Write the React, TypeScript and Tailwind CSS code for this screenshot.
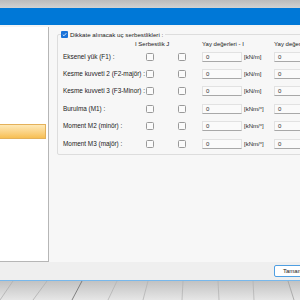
import React from "react";

const rows = [
  { label: "Eksenel yük (F1) :", unit: "[kN/m]" },
  { label: "Kesme kuvveti 2 (F2-majör) :", unit: "[kN/m]" },
  { label: "Kesme kuvveti 3 (F3-Minor) :", unit: "[kN/m]" },
  { label: "Burulma (M1) :", unit: "[kNm/°]" },
  { label: "Moment M2 (minör) :", unit: "[kNm/°]" },
  { label: "Moment M3 (majör) :", unit: "[kNm/°]" },
];

// floor lines of the desktop wallpaper: [x at top, x at bottom, colour]
const floorLines: [number, number, string][] = [
  [13, 0, "#b0b0b0"],
  [47, 33, "#b0b0b0"],
  [82, 72, "#6a6a6a"],
  [117, 108, "#b4b4b4"],
  [148, 143, "#b4b4b4"],
  [183, 182, "#b4b4b4"],
  [218, 219, "#b4b4b4"],
  [253, 254, "#b4b4b4"],
  [288, 294, "#a0a0a0"],
];

function Box() {
  return <div className="w-[8px] h-[8px] rounded-[1.5px] border border-[#9a9a9a] bg-[#fbfbfb]" />;
}

function Field() {
  return (
    <div className="w-[40px] h-[10px] shrink-0 flex items-center pl-[3px] bg-[#fafafa] border border-[#e2e2e2] border-b-[#a8a8a8] text-[#333]">
      0
    </div>
  );
}

export default function App() {
  return (
    <div
      className="w-[300px] h-[300px] overflow-hidden flex flex-col bg-[#f0f0f0] text-[6px] leading-[6px] text-[#222]"
      style={{ fontFamily: '"Liberation Sans", Arial, sans-serif' }}
    >
      <div className="h-[8px] shrink-0 bg-gradient-to-b from-[#bcbcbc] to-[#d2d2d2]" />
      <div className="h-[17px] shrink-0 bg-[#0078d7]" />

      <div className="flex flex-1 pt-[2px] bg-[#f4f4f4]">
        <div className="w-[49px] shrink-0 bg-white border-r border-b border-[#b6b6b6] pt-[97px]">
          <div className="h-[15px] mr-[2px] bg-gradient-to-b from-[#fee9b6] to-[#f7bf52] border border-l-0 border-[#e4b15a]" />
        </div>

        <div className="flex-1 bg-[#f7f7f7] pl-[8px] pt-[7px]">
          <div className="relative w-[270px] border border-[#dddddd] rounded-[2px] pl-[5px] pb-[1.5px]">
            <div className="absolute -top-[4px] left-[3px] flex items-center gap-[2px] bg-[#f7f7f7] pr-[2px] text-[#1a1a1a] text-[6.2px]">
              <div className="w-[7px] h-[7px] rounded-[1px] bg-[#1a73d9] flex items-center justify-center">
                <svg width="5" height="5" viewBox="0 0 10 10">
                  <path d="M1.5 5.2 L4 7.6 L8.6 2.4" fill="none" stroke="white" strokeWidth="1.6" />
                </svg>
              </div>
              <span>Dikkate alınacak uç serbestlikleri :</span>
            </div>

            <div className="h-[13px] flex items-end pb-[1px] whitespace-nowrap">
              <div className="w-[72px] shrink-0" />
              <div className="w-[67px] shrink-0">I Serbestlik J</div>
              <div className="w-[72px] shrink-0">Yay değerleri - I</div>
              <div>Yay değerleri - J</div>
            </div>

            {rows.map((r) => (
              <div key={r.label} className="h-[17.4px] flex items-center whitespace-nowrap">
                <div className="w-[83px] shrink-0 text-[6.4px]">{r.label}</div>
                <div className="w-[32px] shrink-0">
                  <Box />
                </div>
                <div className="w-[24px] shrink-0">
                  <Box />
                </div>
                <Field />
                <div className="w-[32px] shrink-0 pl-[2px]">{r.unit}</div>
                <Field />
              </div>
            ))}
          </div>
        </div>
      </div>

      <div className="h-[18px] shrink-0 bg-[#efefef] flex pl-[274px] pt-[3px]">
        <div className="w-[44px] h-[12px] shrink-0 rounded-[2px] border border-[#4f9fe2] bg-white flex items-center pl-[8px] text-[#222]">
          Tamam
        </div>
      </div>
      <div className="h-px shrink-0 bg-[#78b8ec]" />
      <svg width="300" height="19" className="shrink-0 block">
        <defs>
          <linearGradient id="floor" x1="0" y1="0" x2="0" y2="1">
            <stop offset="0" stopColor="#c2c2c2" />
            <stop offset="1" stopColor="#e6e6e6" />
          </linearGradient>
        </defs>
        <rect width="300" height="19" fill="url(#floor)" />
        {floorLines.map(([a, b, c]) => (
          <line key={a} x1={a} y1={0} x2={b} y2={19} stroke={c} strokeWidth="0.8" />
        ))}
      </svg>
    </div>
  );
}
